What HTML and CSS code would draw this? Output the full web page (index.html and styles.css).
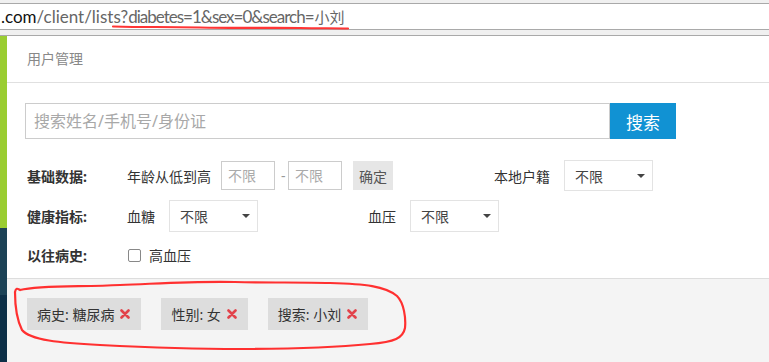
FILE: index.html
```html
<!DOCTYPE html>
<html lang="zh">
<head>
<meta charset="utf-8">
<link rel="stylesheet" href="styles.css">
</head>
<body>
<div class="browser">
  <div class="topstrip"></div>
  <div class="urlbar"><span class="host">.com</span><span class="path">/client/lists?</span><span class="query">diabetes=1&amp;sex=0&amp;search=</span><span class="cjk">小刘</span></div>
  <div class="strip"></div>
</div>
<div class="app">
  <aside class="sidebar"><div class="s1"></div><div class="s2"></div><div class="s3"></div></aside>
  <main class="main">
    <div class="crumb">用户管理</div>
    <div class="filters">
      <div class="search">
        <input class="search-input" type="text" placeholder="搜索姓名/手机号/身份证">
        <button class="search-btn">搜索</button>
      </div>
      <div class="row row1">
        <div class="label">基础数据:</div>
        <span class="txt">年龄从低到高</span>
        <input class="age" type="text" placeholder="不限">
        <span class="dash">-</span>
        <input class="age" type="text" placeholder="不限">
        <button class="ok">确定</button>
        <span class="txt g2">本地户籍</span>
        <div class="select sel-a"><span>不限</span><i class="caret"></i></div>
      </div>
      <div class="row row2">
        <div class="label">健康指标:</div>
        <span class="txt">血糖</span>
        <div class="select sel-b"><span>不限</span><i class="caret"></i></div>
        <span class="txt g3">血压</span>
        <div class="select sel-b"><span>不限</span><i class="caret"></i></div>
      </div>
      <div class="row row3">
        <div class="label">以往病史:</div>
        <span class="check"></span>
        <span class="txt">高血压</span>
      </div>
    </div>
    <div class="tags">
      <span class="tag">病史: 糖尿病<svg class="x" width="10" height="10" viewBox="0 0 10 10"><path d="M1.5 1.5 L8.5 8.5 M8.5 1.5 L1.5 8.5" stroke="#e2434b" stroke-width="2.6" stroke-linecap="round"/></svg></span>
      <span class="tag">性别: 女<svg class="x" width="10" height="10" viewBox="0 0 10 10"><path d="M1.5 1.5 L8.5 8.5 M8.5 1.5 L1.5 8.5" stroke="#e2434b" stroke-width="2.6" stroke-linecap="round"/></svg></span>
      <span class="tag">搜索: 小刘<svg class="x" width="10" height="10" viewBox="0 0 10 10"><path d="M1.5 1.5 L8.5 8.5 M8.5 1.5 L1.5 8.5" stroke="#e2434b" stroke-width="2.6" stroke-linecap="round"/></svg></span>
    </div>
  </main>
</div>
<svg class="annot" width="769" height="362" viewBox="0 0 769 362">
  <path d="M113 26.5 C150 27.5 160 26.5 200 27.5 C240 28.5 260 27.5 300 28 C320 28.5 335 28 348 28.5" fill="none" stroke="#ff3535" stroke-width="2.2" stroke-linecap="round"/>
  <path d="M20 290 C40 285 80 287 120 285 C170 283 200 281 235 282 C270 283 300 282 330 283 C365 284 385 286 397 296 C404 303 406 318 405 328 C403 338 395 342 370 344 C330 348 290 349 240 349 C190 349 140 347 100 345 C60 343 30 340 22 330 C16 318 15 300 15 292 C16 287 18 289 20 290" fill="none" stroke="#ff3030" stroke-width="2.2" stroke-linecap="round" stroke-linejoin="round"/>
</svg>
</body>
</html>
```
FILE: styles.css
```css
* { box-sizing: border-box; }
html, body { margin: 0; padding: 0; }
body {
  width: 769px;
  height: 362px;
  overflow: hidden;
  position: relative;
  background: #fff;
  font-family: "Noto Sans", "Noto Sans CJK SC", sans-serif;
  color: #333;
}
.browser { height: 36px; }
.topstrip { height: 4px; background: #f0f0f0; border-bottom: 1px solid #a9a9a9; }
.urlbar {
  height: 26px;
  line-height: 25px;
  background: #fff;
  border-bottom: 1px solid #a9a9a9;
  font-size: 17px;
  font-family: Lato, "Noto Sans CJK SC", sans-serif;
  white-space: nowrap;
  padding-left: 1px;
}
.urlbar .host { color: #111; }
.urlbar .path { color: #666; }
.urlbar .query { color: #666; letter-spacing: -1px; }
.urlbar .cjk { color: #666; font-size: 15px; font-family: "Noto Sans CJK SC", sans-serif; margin-left: 1px; }
.strip { height: 6px; background: #f0f0f0; border-bottom: 1px solid #a9a9a9; }

.app { display: flex; height: 326px; }
.sidebar { width: 7px; display: flex; flex-direction: column; }
.s1 { height: 192px; background: #9acd32; }
.s2 { height: 67px; background: #1c4256; }
.s3 { flex: 1; background: #0d2f47; }

.main { flex: 1; display: flex; flex-direction: column; }
.crumb {
  height: 47px;
  line-height: 46px;
  padding-left: 20px;
  font-size: 14px;
  color: #888;
  border-bottom: 1px solid #e0e0e0;
}
.filters { height: 196px; padding: 20px 0 0 20px; border-bottom: 1px solid #ddd; }
.search { display: flex; height: 36px; margin-left: -2px; }
.search-input {
  width: 585px;
  height: 36px;
  border: 1px solid #ccc;
  padding: 0 8px;
  font-size: 16px;
  font-family: inherit;
  outline: none;
}
.search-input::placeholder { color: #a8a8a8; }
.search-btn {
  width: 66px;
  height: 36px;
  border: 0;
  background: #1192d3;
  color: #fff;
  font-size: 17px;
  font-family: inherit;
  padding: 0;
}
.row { display: flex; align-items: center; font-size: 14px; }
.row1 { margin-top: 21px; height: 31px; }
.row2 { margin-top: 9px; height: 32px; }
.row3 { margin-top: 9px; height: 28px; }
.label { width: 100px; font-weight: bold; color: #333; }
.txt { color: #333; }
.age {
  width: 54px;
  height: 29px;
  margin-left: 10px;
  border: 1px solid #ccc;
  padding: 0 6px;
  font-size: 14px;
  font-family: inherit;
  outline: none;
}
.age::placeholder { color: #aaa; }
.dash { margin-left: 6px; color: #999; width: 7px; }
.dash + .age { margin-left: 0; }
.ok {
  margin-left: 11px;
  width: 40px;
  height: 29px;
  border: 0;
  background: #e6e6e6;
  color: #555;
  font-size: 14px;
  font-family: inherit;
  padding: 0;
}
.g2 { margin-left: 101px; }
.g3 { margin-left: 110px; }
.select {
  position: relative;
  width: 89px;
  height: 31px;
  border: 1px solid #e3e3e3;
  padding-left: 10px;
  display: flex;
  align-items: center;
  font-size: 14px;
  color: #444;
}
.sel-a { margin-left: 14px; }
.sel-b { margin-left: 14px; height: 32px; }
.caret {
  position: absolute;
  right: 7px;
  top: 50%;
  margin-top: -2px;
  width: 0;
  height: 0;
  border-left: 4px solid transparent;
  border-right: 4px solid transparent;
  border-top: 4px solid #444;
}
.check {
  width: 13px;
  height: 13px;
  border: 1px solid #888;
  border-radius: 2px;
  margin-left: 1px;
  margin-right: 8px;
}
.tags {
  flex: 1;
  background: #f4f4f4;
  padding: 19px 0 0 20px;
  display: flex;
  align-items: flex-start;
  gap: 20px;
}
.tag {
  height: 32px;
  background: #dddddd;
  padding: 0 11px 0 10px;
  font-size: 14px;
  color: #333;
  display: inline-flex;
  align-items: center;
}
.x { margin-left: 6px; flex: none; }
.annot { position: absolute; left: 0; top: 0; pointer-events: none; }
```
